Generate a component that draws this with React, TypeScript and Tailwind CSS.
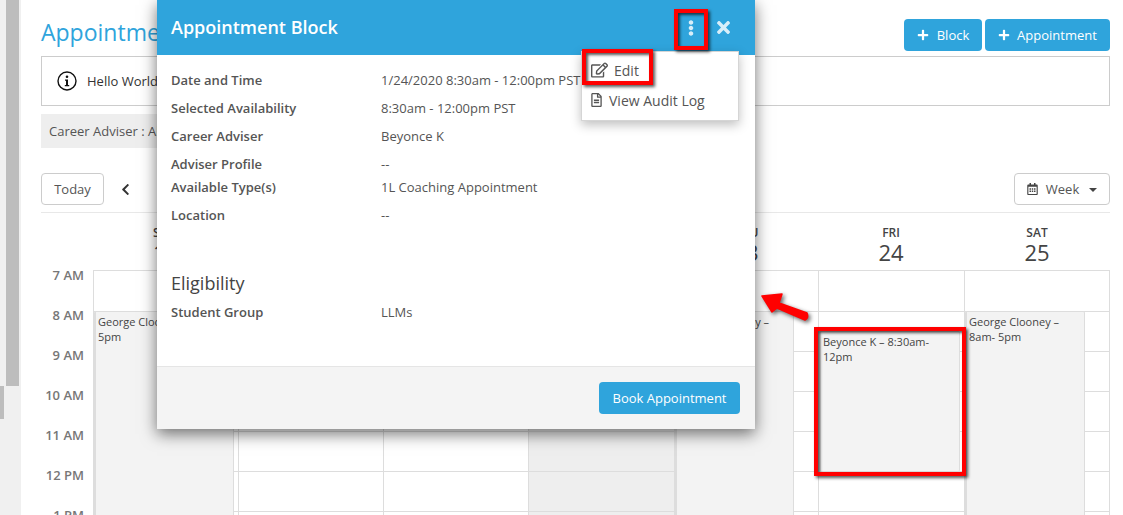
import React from 'react';
import { FaChevronLeft, FaEllipsisV, FaPlus, FaRegCalendarAlt, FaRegEdit, FaRegFileAlt, FaTimes } from 'react-icons/fa';

const hours = ['7 AM', '8 AM', '9 AM', '10 AM', '11 AM', '12 PM', '1 PM'];

const days = [
  { label: 'SUN', date: '19', width: 'w-[145px]' },
  { label: 'MON', date: '20', width: 'w-[145px]' },
  { label: 'TUE', date: '21', width: 'w-[145px]' },
  { label: 'WED', date: '22', width: 'w-[146px]' },
  { label: 'THU', date: '23', width: 'w-[144px]' },
  { label: 'FRI', date: '24', width: 'w-[146px]' },
  { label: 'SAT', date: '25', width: 'w-[146px]' },
];

const details = [
  { label: 'Date and Time', value: '1/24/2020 8:30am - 12:00pm PST', gap: 'mb-[8px]' },
  { label: 'Selected Availability', value: '8:30am - 12:00pm PST', gap: 'mb-[8px]' },
  { label: 'Career Adviser', value: 'Beyonce K', gap: 'mb-[8px]' },
  { label: 'Adviser Profile', value: '--', gap: 'mb-[3px]' },
  { label: 'Available Type(s)', value: '1L Coaching Appointment', gap: 'mb-[8px]' },
  { label: 'Location', value: '--', gap: '' },
];

const redBox =
  'absolute border-4 border-[#ff0000] shadow-[2px_2px_3px_rgba(0,0,0,0.65),inset_2px_2px_3px_rgba(0,0,0,0.65)]';

function DetailRow({ label, value, gap }: { label: string; value: string; gap?: string }) {
  return (
    <div className={`flex h-[20px] items-center text-[13px] ${gap ?? ''}`}>
      <div className="w-[210px] font-semibold text-[#555]">{label}</div>
      <div className="text-[#555]">{value}</div>
    </div>
  );
}

function CalEvent({ className, lines }: { className: string; lines: string[] }) {
  return (
    <div className={`absolute rounded-[2px] border border-l-2 border-[#dddddd] bg-[#f3f3f3] pl-[2px] pt-[2px] text-[11px] leading-[15px] text-[#444] ${className}`}>
      {lines.map((line) => (
        <div key={line}>{line}</div>
      ))}
    </div>
  );
}

export default function App() {
  return (
    <div className="relative flex h-[515px] w-[1123px] overflow-hidden bg-white font-['Open_Sans',sans-serif]">
      {/* left rail */}
      <div className="relative w-[21px] shrink-0 bg-[#f0f0f0]">
        <div className="ml-[6px] h-[386px] w-[13px] bg-[#bdbdbd]" />
        <div className="h-[33px] w-[4px] bg-[#bdbdbd]" />
      </div>

      <div className="w-[1089px] shrink-0 pl-[20px] pt-[19px]">
        <div className="flex h-[32px] w-[1069px] items-start justify-between">
          <h1 className="-mt-[1px] text-[23px] leading-[28px] text-[#2fa4dc]">Appointments</h1>
          <div className="flex gap-[3px] pt-0 text-[13px] text-white">
            <button className="flex h-[32px] w-[78px] items-center justify-center gap-[8px] rounded-[4px] bg-[#2fa4dc] pt-[2px]">
              <FaPlus className="-mt-[2px] h-[12px] w-[12px]" /> Block
            </button>
            <button className="flex h-[32px] w-[125px] items-center justify-center gap-[7px] rounded-[4px] bg-[#2fa4dc] pt-[2px]">
              <FaPlus className="-mt-[2px] h-[12px] w-[12px]" /> Appointment
            </button>
          </div>
        </div>

        <div className="mt-[5px] flex h-[50px] w-[1069px] items-center gap-[10px] border border-[#cccccc] pl-[15px] text-[13px] text-[#333]">
          <svg width="20" height="20" viewBox="0 0 20 20" fill="none" className="shrink-0">
            <circle cx="10" cy="10" r="9" stroke="#111" strokeWidth="1.4" />
            <circle cx="10" cy="5.8" r="1.3" fill="#111" />
            <path d="M8 8.6h3v5.4h1.2v1.2H7.8V14H9V9.8H8z" fill="#111" />
          </svg>
          <span className="pt-[2px]">Hello World</span>
        </div>

        <div className="mt-[8px] flex h-[34px] w-[500px] items-center bg-[#eeeeee] pl-[8px] pt-[2px] text-[13px] text-[#555]">
          Career Adviser : All
        </div>

        <div className="mt-[25px] flex h-[32px] w-[1069px] items-center justify-between text-[13px] text-[#555]">
          <div className="flex items-center">
            <button className="h-[32px] w-[63px] rounded-[4px] border border-[#cccccc] pt-[2px]">Today</button>
            <FaChevronLeft className="ml-[15px] h-[13px] w-[13px] text-[#333]" />
          </div>
          <button className="flex h-[32px] w-[96px] items-center justify-center gap-[8px] rounded-[4px] border border-[#cccccc] pt-[2px]">
            <FaRegCalendarAlt className="-mt-[2px] h-[12px] w-[11px] text-[#444]" />
            Week
            <span className="ml-[2px] h-0 w-0 border-x-[4px] border-t-[4px] border-x-transparent border-t-[#444]" />
          </button>
        </div>

        <div className="mt-[7px] w-[1069px] border-t border-[#e8e8e8]" />

        {/* day headings */}
        <div className="flex h-[57px] pl-[52px]">
          {days.map((day) => (
            <div key={day.label} className={`${day.width} shrink-0 pt-[12px] text-center text-[#444]`}>
              <div className="text-[12px] font-semibold leading-[15px]">{day.label}</div>
              <div className="text-[22px] leading-[25px]">{day.date}</div>
            </div>
          ))}
        </div>

        {/* calendar grid */}
        <div className="flex">
          <div className="w-[52px] shrink-0">
            {hours.map((hour) => (
              <div key={hour} className="h-[40px] pr-[9px] text-right text-[13px] font-semibold leading-[11px] text-[#777]">
                {hour}
              </div>
            ))}
          </div>
          {days.map((day, d) => (
            <div
              key={day.label}
              className={`relative h-[245px] shrink-0 border-l border-[#dddddd] ${day.width} ${d === 3 ? 'bg-[#eeeeee]' : ''} ${d === 6 ? 'border-r' : ''}`}
            >
              {hours.map((hour, i) => (
                <div key={hour} className={`border-t border-[#dddddd] ${i === 0 ? 'h-[41px]' : 'h-[40px]'}`} />
              ))}
              {d === 0 && <CalEvent className="left-0 top-[41px] h-[210px] w-[140px]" lines={['George Clooney – 8am-', '5pm']} />}
              {d === 4 && <CalEvent className="left-0 top-[41px] h-[210px] w-[119px]" lines={['George Clooney –', '8am- 5pm']} />}
              {d === 5 && <CalEvent className="left-0 top-[61px] h-[141px] w-[141px]" lines={['Beyonce K – 8:30am-', '12pm']} />}
              {d === 6 && <CalEvent className="left-0 top-[41px] h-[210px] w-[120px]" lines={['George Clooney –', '8am- 5pm']} />}
            </div>
          ))}
        </div>
      </div>

      {/* modal */}
      <div className="absolute left-[157px] top-0 flex h-[429px] w-[598px] flex-col bg-white shadow-[0_5px_15px_rgba(0,0,0,0.55)]">
        <div className="flex h-[55px] shrink-0 items-center bg-[#2fa4dc] pl-[14px] text-white">
          <h2 className="flex-1 text-[18px] font-semibold">Appointment Block</h2>
          <FaEllipsisV className="mr-[19px] h-[16px] w-[14px] text-[#d8eef9]" />
          <FaTimes className="mr-[25px] h-[19px] w-[13px] text-[#d8eef9]" />
        </div>
        <div className="flex-1 pl-[14px] pt-[16px]">
          {details.map((row) => (
            <DetailRow key={row.label} label={row.label} value={row.value} gap={row.gap} />
          ))}
          <h3 className="mt-[44px] h-[26px] text-[18px] leading-[26px] text-[#444]">Eligibility</h3>
          <div className="mt-[7px]">
            <DetailRow label="Student Group" value="LLMs" />
          </div>
        </div>
        <div className="flex h-[63px] shrink-0 items-center justify-end border-t border-[#e5e5e5] bg-[#f4f4f4] pr-[15px]">
          <button className="h-[32px] w-[141px] rounded-[4px] bg-[#2fa4dc] pt-[1px] text-[13px] font-medium text-white">
            Book Appointment
          </button>
        </div>
      </div>

      {/* dropdown */}
      <div className="absolute left-[581px] top-[51px] h-[70px] w-[158px] border border-[#d5d5d5] bg-white text-[14px] text-[#555] shadow-[0_4px_10px_rgba(0,0,0,0.25)]">
        <div className="flex h-[36px] items-center pl-[9px]">
          <FaRegEdit className="h-[16px] w-[17px]" />
          <span className="ml-[6px]">Edit</span>
        </div>
        <div className="flex h-[24px] items-center pl-[9px]">
          <FaRegFileAlt className="h-[14px] w-[11px]" />
          <span className="ml-[7px]">View Audit Log</span>
        </div>
      </div>

      {/* annotations */}
      <div className={`${redBox} left-[674px] top-[9px] h-[41px] w-[34px]`} />
      <div className={`${redBox} left-[582px] top-[49px] h-[36px] w-[71px]`} />
      <div className={`${redBox} left-[814px] top-[327px] h-[149px] w-[152px]`} />
      <svg width="60" height="40" viewBox="0 0 60 40" className="absolute left-[755px] top-[288px] drop-shadow-[2px_2px_2px_rgba(0,0,0,0.6)]">
        <path d="M7 8 L27 6 L24 15 L52 25 Q54 30 50 32 L22 20 L17 24 Z" fill="#ff0000" stroke="#ff0000" strokeWidth="1.5" strokeLinejoin="round" />
      </svg>
    </div>
  );
}
